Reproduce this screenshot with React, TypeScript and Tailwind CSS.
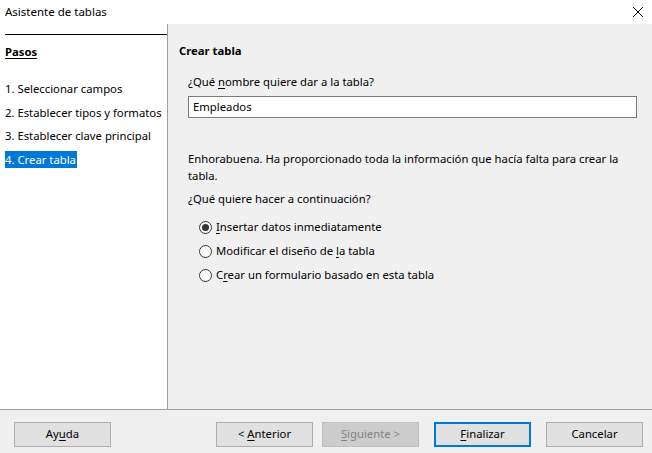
import React from 'react';

const font = { fontFamily: '"Noto Sans", "Segoe UI", sans-serif' };

const steps = [
  '1. Seleccionar campos',
  '2. Establecer tipos y formatos',
  '3. Establecer clave principal',
  '4. Crear tabla',
];

const options = [
  { pre: '', key: 'I', post: 'nsertar datos inmediatamente', checked: true },
  { pre: 'Modificar el diseño de ', key: 'l', post: 'a tabla', checked: false },
  { pre: 'C', key: 'r', post: 'ear un formulario basado en esta tabla', checked: false },
];

const Radio = ({ checked }: { checked: boolean }) => (
  <span className="flex h-[13px] w-[13px] shrink-0 items-center justify-center rounded-full border border-[#333333] bg-white">
    {checked && <span className="h-[7px] w-[7px] rounded-full bg-[#333333]" />}
  </span>
);

type BtnProps = {
  pre?: string;
  mn?: string;
  post?: string;
  variant?: 'normal' | 'disabled' | 'default';
};

const Button = ({ pre = '', mn = '', post = '', variant = 'normal' }: BtnProps) => {
  const styles =
    variant === 'disabled'
      ? 'border border-[#bfbfbf] bg-[#cccccc] text-[#838383]'
      : variant === 'default'
      ? 'border-2 border-[#0078d7] bg-[#e1e1e1] text-black'
      : 'border border-[#adadad] bg-[#e1e1e1] text-black';
  return (
    <div className={`flex h-[25px] w-[97px] items-center justify-center ${styles}`}>
      <span>
        {pre}
        {mn && <span className="underline underline-offset-2">{mn}</span>}
        {post}
      </span>
    </div>
  );
};

export default function App() {
  return (
    <div className="flex h-[453px] w-[652px] flex-col bg-[#f0f0f0] text-[11.3px] text-black" style={font}>
      {/* title bar */}
      <div className="flex h-[24px] items-center justify-between bg-white pl-[5px] pr-[7px]">
        <span className="text-[11.5px]">Asistente de tablas</span>
        <svg width="12" height="12" viewBox="0 0 12 12" className="mr-[1px]">
          <path d="M1 1 L11 11 M11 1 L1 11" stroke="#000" strokeWidth="1" fill="none" />
        </svg>
      </div>

      <div className="flex h-[385px]">
        {/* steps pane */}
        <div className="w-[168px] shrink-0 border-r border-[#a0a0a0] bg-white pt-[10px]">
          <div className="ml-[5px] border-t border-black" />
          <div className="mt-[9px] pl-[5px] font-bold underline underline-offset-2 leading-[16px]">Pasos</div>
          <div className="mt-[20px] flex flex-col gap-[6.6px] pl-[5px]">
            {steps.map((s, i) => (
              <div key={s} className="h-[17px] whitespace-nowrap leading-[17px]">
                <span className={i === 3 ? 'inline-block bg-[#0078d7] pr-[1px] text-white' : ''}>{s}</span>
              </div>
            ))}
          </div>
        </div>

        {/* content pane */}
        <div className="flex-1 pt-[19px]">
          <div className="pl-[11px] font-bold leading-[16px]">Crear tabla</div>
          <div className="mt-[15px] pl-[20px] pr-[15px]">
            <div className="leading-[16px]">
              ¿Qué <span className="underline underline-offset-2">n</span>ombre quiere dar a la tabla?
            </div>
            <div className="mt-[6px] flex h-[22px] items-center border border-[#7a7a7a] bg-white pl-[4px]">
              Empleados
            </div>
            <div className="mt-[32px] leading-[17px]">
              Enhorabuena. Ha proporcionado toda la información que hacía falta para crear la tabla.
            </div>
            <div className="mt-[7px] leading-[16px]">¿Qué quiere hacer a continuación?</div>
            <div className="mt-[12px] flex flex-col gap-[7px] pl-[11px]">
              {options.map((o) => (
                <div key={o.post} className="flex h-[17px] items-center gap-[4px]">
                  <Radio checked={o.checked} />
                  <span>
                    {o.pre}
                    <span className="underline underline-offset-2">{o.key}</span>
                    {o.post}
                  </span>
                </div>
              ))}
            </div>
          </div>
        </div>
      </div>

      {/* footer */}
      <div className="flex flex-1 items-start border-t border-[#a0a0a0] pt-[12px]">
        <div className="ml-[14px]">
          <Button pre="Ay" mn="u" post="da" />
        </div>
        <div className="ml-[105px]">
          <Button pre="< " mn="A" post="nterior" />
        </div>
        <div className="ml-[9px]">
          <Button mn="S" post="iguiente >" variant="disabled" />
        </div>
        <div className="ml-[15px]">
          <Button mn="F" post="inalizar" variant="default" />
        </div>
        <div className="ml-[15px]">
          <Button pre="Cancelar" />
        </div>
      </div>
    </div>
  );
}
